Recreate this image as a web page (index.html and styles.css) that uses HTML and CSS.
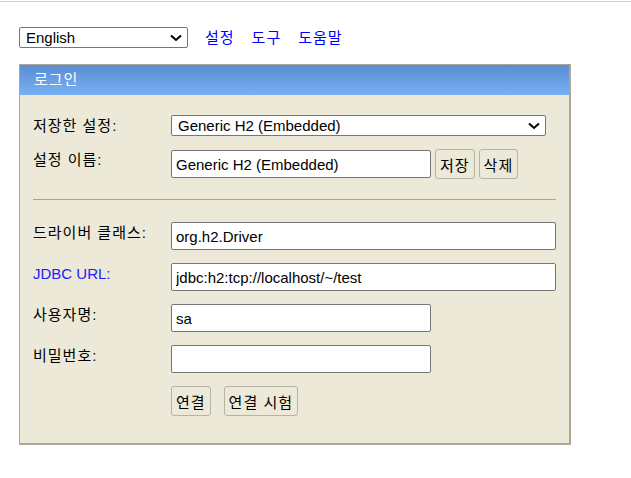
FILE: index.html
```html
<!DOCTYPE html>
<html lang="ko">
<head>
  <meta charset="UTF-8">
  <title>H2 Console</title>
  <link rel="stylesheet" href="styles.css">
</head>
<body>
  <div class="frame">
    <div class="page">
      <div class="toolbar">
        <span class="select-wrap">
          <select class="lang">
            <option>English</option>
          </select>
          <svg class="chevron" width="12" height="8" viewBox="0 0 12 8"><path d="M1 1.5 L6 6 L11 1.5" fill="none" stroke="#000" stroke-width="2"/></svg>
        </span>
        <a href="#">설정</a>
        <a href="#">도구</a>
        <a href="#">도움말</a>
      </div>

      <div class="panel">
        <div class="panel-title">로그인</div>
        <div class="form">
          <div class="row">
            <div class="label">저장한 설정:</div>
            <span class="select-wrap">
              <select class="setting">
                <option>Generic H2 (Embedded)</option>
              </select>
              <svg class="chevron" width="12" height="8" viewBox="0 0 12 8"><path d="M1 1.5 L6 6 L11 1.5" fill="none" stroke="#000" stroke-width="2"/></svg>
            </span>
          </div>
          <div class="row">
            <div class="label">설정 이름:</div>
            <div class="controls">
              <input class="short" type="text" value="Generic H2 (Embedded)">
              <button>저장</button>
              <button>삭제</button>
            </div>
          </div>

          <hr class="sep">

          <div class="row">
            <div class="label">드라이버 클래스:</div>
            <input class="long" type="text" value="org.h2.Driver">
          </div>
          <div class="row">
            <div class="label link">JDBC URL:</div>
            <input class="long" type="text" value="jdbc:h2:tcp://localhost/~/test">
          </div>
          <div class="row">
            <div class="label">사용자명:</div>
            <input class="short" type="text" value="sa">
          </div>
          <div class="row">
            <div class="label">비밀번호:</div>
            <input class="short" type="password" value="">
          </div>
          <div class="row">
            <div class="label"></div>
            <div class="controls wide-gap">
              <button>연결</button>
              <button>연결 시험</button>
            </div>
          </div>
        </div>
      </div>
    </div>
  </div>
</body>
</html>
```

FILE: styles.css
```css
body {
  margin: 0;
  background: #fff;
  font-family: "Liberation Sans", "Noto Sans CJK KR", sans-serif;
  font-size: 15px;
  color: #000;
}
.frame {
  margin-top: 1px;
  border-top: 1px solid #d3d3d3;
}
.page {
  padding: 25px 19px;
}
.toolbar {
  display: flex;
  align-items: center;
  gap: 16px;
  height: 21px;
}
.toolbar a {
  margin-left: 1px;
  color: #0000ff;
  text-decoration: none;
  line-height: 21px;
  letter-spacing: 1px;
}
.select-wrap {
  position: relative;
  display: inline-block;
  height: 21px;
}
.chevron {
  position: absolute;
  right: 6px;
  top: 7px;
  pointer-events: none;
}
select {
  appearance: none;
  -webkit-appearance: none;
  box-sizing: border-box;
  height: 21px;
  margin: 0;
  padding: 0 20px 0 6px;
  font: inherit;
  font-size: 15px;
  line-height: 19px;
  color: #000;
  background: #fff;
  border: 1px solid #767676;
  border-radius: 2px;
}
.lang {
  width: 169px;
}
.setting {
  width: 375px;
}
.panel {
  box-sizing: border-box;
  width: 552px;
  margin-top: 16px;
  background: #ece9d8;
  border: 1px solid #aca899;
  border-right-width: 2px;
  border-bottom-width: 2px;
}
.panel-title {
  height: 30px;
  line-height: 30px;
  padding-left: 14px;
  color: #fff;
  letter-spacing: 1px;
  background: linear-gradient(#5a8dd3, #79b0f3);
}
.form {
  display: flex;
  flex-direction: column;
  gap: 13px;
  padding: 20px 13px 27px 13px;
}
.row {
  display: flex;
  align-items: flex-start;
}
.label {
  width: 138px;
  flex-shrink: 0;
  padding-top: 1px;
  line-height: 20px;
  letter-spacing: 1px;
}
.label.link {
  color: #2020ff;
  letter-spacing: 0;
}
.controls {
  display: flex;
  align-items: center;
  gap: 4px;
}
.controls.wide-gap {
  gap: 13px;
}
input {
  box-sizing: border-box;
  height: 28px;
  margin: 0;
  padding: 0 4px;
  font: inherit;
  font-size: 15px;
  color: #000;
  background: #fff;
  border: 1px solid #767676;
  border-radius: 2px;
}
.short {
  width: 260px;
}
.long {
  width: 385px;
}
button {
  box-sizing: border-box;
  height: 30px;
  margin: 0;
  padding: 0 4px;
  font: inherit;
  font-size: 15px;
  letter-spacing: 1px;
  color: #000;
  background: #ece9d8;
  border: 1px solid #b5b2a6;
  border-radius: 3px;
}
.sep {
  margin: 7px 0 9px 0;
  height: 0;
  border: 0;
  border-top: 1px solid #a3a3a3;
}
```
